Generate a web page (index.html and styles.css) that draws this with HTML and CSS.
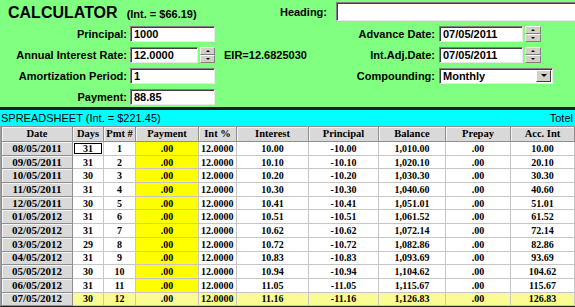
FILE: index.html
```html
<!DOCTYPE html>
<html>
<head>
<meta charset="utf-8">
<link rel="stylesheet" href="styles.css">
</head>
<body>
<div class="top">
  <div class="title"><span class="big">CALCULATOR</span><span class="small">(Int. = $66.19)</span></div>
  <div class="lbl head-lbl">Heading:</div>
  <div class="cell-head"><div class="field heading"></div></div>

  <div class="lbl">Principal:</div>
  <div class="cell"><div class="field w85">1000</div></div>
  <div></div>
  <div class="lbl r">Advance Date:</div>
  <div class="cell"><div class="field w84">07/05/2011</div><div class="spin"><span class="b up"></span><span class="b dn"></span></div></div>

  <div class="lbl">Annual Interest Rate:</div>
  <div class="cell"><div class="field w68">12.0000</div><div class="spin s15"><span class="b up"></span><span class="b dn"></span></div></div>
  <div class="eir">EIR=12.6825030</div>
  <div class="lbl r">Int.Adj.Date:</div>
  <div class="cell"><div class="field w84">07/05/2011</div><div class="spin"><span class="b up"></span><span class="b dn"></span></div></div>

  <div class="lbl">Amortization Period:</div>
  <div class="cell"><div class="field w85">1</div></div>
  <div></div>
  <div class="lbl r">Compounding:</div>
  <div class="cell"><div class="field select">Monthly<span class="drop"><span class="tri"></span></span></div></div>

  <div class="lbl">Payment:</div>
  <div class="cell"><div class="field w85">88.85</div></div>
  <div></div><div></div><div></div>
</div>
<div class="sep"></div>
<div class="band"><span>SPREADSHEET (Int. = $221.45)</span><span>Totel</span></div>
<div class="wrap">
<table class="grid">
  <colgroup>
    <col class="c1"><col class="c2"><col class="c3"><col class="c4"><col class="c5"><col class="c6"><col class="c7"><col class="c8"><col class="c9"><col class="c10">
  </colgroup>
  <thead>
    <tr><th>Date</th><th>Days</th><th>Pmt #</th><th>Payment</th><th>Int %</th><th>Interest</th><th>Principal</th><th>Balance</th><th>Prepay</th><th>Acc. Int</th></tr>
  </thead>
  <tbody>
    <tr><td class="d">08/05/2011</td><td><span class="focus">31</span></td><td>1</td><td class="y">.00</td><td class="l">12.0000</td><td>10.00</td><td>-10.00</td><td>1,010.00</td><td>.00</td><td>10.00</td></tr>
    <tr><td class="d">09/05/2011</td><td>31</td><td>2</td><td class="y">.00</td><td class="l">12.0000</td><td>10.10</td><td>-10.10</td><td>1,020.10</td><td>.00</td><td>20.10</td></tr>
    <tr><td class="d">10/05/2011</td><td>30</td><td>3</td><td class="y">.00</td><td class="l">12.0000</td><td>10.20</td><td>-10.20</td><td>1,030.30</td><td>.00</td><td>30.30</td></tr>
    <tr><td class="d">11/05/2011</td><td>31</td><td>4</td><td class="y">.00</td><td class="l">12.0000</td><td>10.30</td><td>-10.30</td><td>1,040.60</td><td>.00</td><td>40.60</td></tr>
    <tr><td class="d">12/05/2011</td><td>30</td><td>5</td><td class="y">.00</td><td class="l">12.0000</td><td>10.41</td><td>-10.41</td><td>1,051.01</td><td>.00</td><td>51.01</td></tr>
    <tr><td class="d">01/05/2012</td><td>31</td><td>6</td><td class="y">.00</td><td class="l">12.0000</td><td>10.51</td><td>-10.51</td><td>1,061.52</td><td>.00</td><td>61.52</td></tr>
    <tr><td class="d">02/05/2012</td><td>31</td><td>7</td><td class="y">.00</td><td class="l">12.0000</td><td>10.62</td><td>-10.62</td><td>1,072.14</td><td>.00</td><td>72.14</td></tr>
    <tr><td class="d">03/05/2012</td><td>29</td><td>8</td><td class="y">.00</td><td class="l">12.0000</td><td>10.72</td><td>-10.72</td><td>1,082.86</td><td>.00</td><td>82.86</td></tr>
    <tr><td class="d">04/05/2012</td><td>31</td><td>9</td><td class="y">.00</td><td class="l">12.0000</td><td>10.83</td><td>-10.83</td><td>1,093.69</td><td>.00</td><td>93.69</td></tr>
    <tr><td class="d">05/05/2012</td><td>30</td><td>10</td><td class="y">.00</td><td class="l">12.0000</td><td>10.94</td><td>-10.94</td><td>1,104.62</td><td>.00</td><td>104.62</td></tr>
    <tr><td class="d">06/05/2012</td><td>31</td><td>11</td><td class="y">.00</td><td class="l">12.0000</td><td>11.05</td><td>-11.05</td><td>1,115.67</td><td>.00</td><td>115.67</td></tr>
    <tr class="last"><td class="d">07/05/2012</td><td>30</td><td>12</td><td>.00</td><td class="l">12.0000</td><td>11.16</td><td>-11.16</td><td>1,126.83</td><td>.00</td><td>126.83</td></tr>
  </tbody>
</table>
</div>
</body>
</html>
```
FILE: styles.css
```css
html, body { margin: 0; padding: 0; }
body { width: 575px; height: 307px; overflow: hidden; background: #fff; font-family: "Liberation Sans", Arial, sans-serif; }

.top {
  display: grid;
  grid-template-columns: 130px 86px 116px 107px 1fr;
  grid-template-rows: 23px repeat(4, 21px);
  height: 107px;
  background: #80ff80;
  font: bold 11px "Liberation Sans", Arial, sans-serif;
  color: #000;
  align-items: center;
}
.title { grid-column: 1 / 3; padding-left: 8px; display: flex; align-items: baseline; gap: 9px; padding-top: 2px; }
.title .big { font-size: 16px; font-weight: bold; letter-spacing: 0; }
.title .small { font-size: 11px; }
.lbl { text-align: right; padding-right: 3px; white-space: nowrap; }
.lbl.r { padding-right: 4px; }
.head-lbl { padding-right: 5px; }
.cell-head { grid-column: 4 / 6; padding-left: 4px; }
.cell { display: flex; align-items: center; }
.eir { padding-left: 8px; }

.field {
  box-sizing: border-box;
  height: 16px;
  background: #fff;
  border-top: 1px solid #808080;
  border-left: 1px solid #808080;
  border-right: 1px solid #e8e8e8;
  border-bottom: 1px solid #e8e8e8;
  box-shadow: inset 1px 1px 0 #404040;
  padding: 1px 0 0 3px;
  line-height: 13px;
  font: bold 11px "Liberation Sans", Arial, sans-serif;
  white-space: nowrap;
}
.heading { height: 19px; width: 245px; }
.w85 { width: 85px; }
.w84 { width: 84px; }
.w68 { width: 68px; }
.select { width: 114px; position: relative; }
.drop {
  position: absolute; right: 1px; top: 1px; width: 15px; height: 12px;
  box-sizing: border-box; background: #d4d0c8;
  border-top: 1px solid #fff; border-left: 1px solid #fff;
  border-right: 1px solid #404040; border-bottom: 1px solid #404040;
  display: flex; align-items: center; justify-content: center;
}
.tri { width: 0; height: 0; border-left: 3px solid transparent; border-right: 3px solid transparent; border-top: 3px solid #000; }

.spin { display: flex; flex-direction: column; width: 16px; height: 16px; margin-left: 2px; }
.spin.s15 { width: 15px; }
.spin .b {
  flex: 1; box-sizing: border-box; background: #d4d0c8;
  border-top: 1px solid #fff; border-left: 1px solid #fff;
  border-right: 1px solid #808080; border-bottom: 1px solid #808080;
  display: flex; align-items: center; justify-content: center;
}
.spin .b::after { content: ""; width: 0; height: 0; border-left: 2px solid transparent; border-right: 2px solid transparent; }
.spin .up::after { border-bottom: 2px solid #000; }
.spin .dn::after { border-top: 2px solid #000; }

.sep { height: 3px; background: #1c1c1c; }
.band {
  height: 16px; background: #00ffff; display: flex; justify-content: space-between; align-items: center;
  font: 11px "Liberation Sans", Arial, sans-serif; color: #000; padding: 0 2px 0 1px;
}

.wrap { padding-left: 1px; background: #9c9c9c; border-bottom: 2px solid #222; }
.grid {
  table-layout: fixed; width: 574px; border-collapse: collapse; background: #fff;
  font: bold 10px "Liberation Serif", "Times New Roman", serif; color: #000;
}
.c1 { width: 71px; } .c2 { width: 31px; } .c3 { width: 32px; } .c4 { width: 63px; } .c5 { width: 38px; }
.c6 { width: 72px; } .c7 { width: 70px; } .c8 { width: 67px; } .c9 { width: 65px; } .c10 { width: 64px; }
.grid th {
  height: 14px; padding: 0; font-size: 10.5px; line-height: 12px; background: #d9d9d9;
  border: 1px solid #8e8e8e; box-shadow: inset 1px 1px 0 #f4f4f4; text-align: center;
}
.grid td {
  height: 12.7px; padding: 0; text-align: center; border: 1px solid #c6c6c6; line-height: 11px; white-space: nowrap;
}
.grid td.d { background: #d9d9d9; border: 1px solid #8e8e8e; box-shadow: inset 1px 1px 0 #f4f4f4; font-size: 11px; }
.grid td.y { background: #ffff00; }
.grid td.l { text-align: left; padding-left: 2px; }
.grid tr.last td { background: #fbfb94; }
.grid tr.last td.d { background: #d9d9d9; }
.focus { display: block; margin: 0 1px; border: 1px solid #000; line-height: 9px; }
```
